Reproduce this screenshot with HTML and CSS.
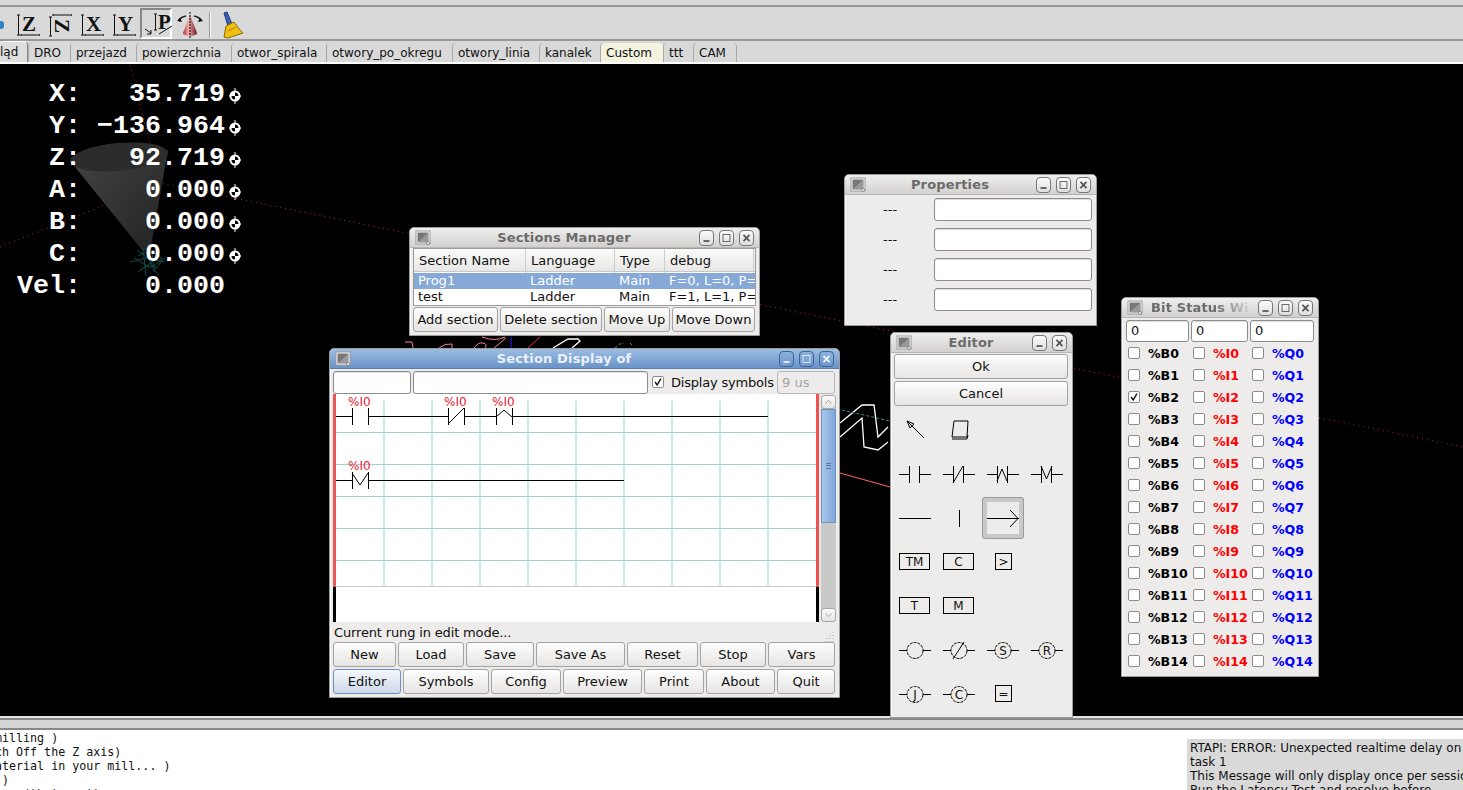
FILE: index.html
```html
<!DOCTYPE html>
<html lang="pl">
<head>
<meta charset="utf-8">
<title>AXIS ClassicLadder</title>
<link rel="stylesheet" href="styles.css">
</head>
<body>
<svg width="0" height="0" class="defs">
  <symbol id="wicon" viewBox="0 0 16 16"><rect x="1" y="1" width="14" height="13" fill="#fff" stroke="#999"/><rect x="2.5" y="2.5" width="11" height="10" fill="#777"/><path d="M3 12L13 3V12Z" fill="#999"/><circle cx="13" cy="13" r="1.5" fill="#eee" stroke="#666" stroke-width=".6"/></symbol>
  <symbol id="homed" viewBox="0 0 12 16"><path d="M6 0V16M0 8H12" stroke="#fff" stroke-width="1"/><circle cx="6" cy="8" r="5.500" fill="#fff"/><path d="M6 8V4.500A3.500 3.500 0 0 1 9.500 8ZM6 8V11.500A3.500 3.500 0 0 1 2.500 8Z" fill="#000"/></symbol>
</svg>

<div class="topline"></div>
<div class="toolbar">
  <span class="tb-stub"></span>
  <svg class="tb z" width="24" height="26" viewBox="0 0 24 26"><path d="M1 3H4M2.500 3V23M1 23H4M5 22V24M5 23H24M24 22V24" class="br"/><text x="6" y="19" class="tl">Z</text></svg>
  <svg class="tb" width="24" height="26" viewBox="0 0 24 26"><path d="M1 5H4M2.500 5V24M1 24H4M5 3H24M5 2V4M24 2V4" class="br"/><text x="14" y="21" text-anchor="middle" transform="rotate(90 14 14)" class="tl">Z</text></svg>
  <svg class="tb" width="24" height="26" viewBox="0 0 24 26"><path d="M1 3H4M2.500 3V23M1 23H4M5 22V24M5 23H24M24 22V24" class="br"/><text x="6" y="19" class="tl">X</text></svg>
  <svg class="tb" width="24" height="26" viewBox="0 0 24 26"><path d="M1 3H4M2.500 3V23M1 23H4M5 22V24M5 23H24M24 22V24" class="br"/><text x="6" y="19" class="tl">Y</text></svg>
  <span class="tb-active"><svg width="28" height="26" viewBox="0 0 28 26"><path d="M10 2H13M11.500 2V18M10 18H13M1 17L7 21M7 18V22M7 22H3M15 22L28 14" class="br"/><text x="14" y="17" class="tl">P</text></svg></span>
  <svg class="tb cone" width="26" height="26" viewBox="0 0 26 26"><defs><linearGradient id="cg" x1="0" x2="1" y1="0" y2="0"><stop offset="0" stop-color="#a33"/><stop offset=".4" stop-color="#f7b0a8"/><stop offset="1" stop-color="#612"/></linearGradient></defs><path d="M13 3L20 21A7 3 0 0 1 6 21Z" fill="url(#cg)"/><path d="M13 0V26" stroke="#000" stroke-dasharray="2 1"/><path d="M2 8Q4 5 9 4M24 8Q22 5 17 4" stroke="#222" stroke-width="1.500" fill="none"/><path d="M0 9L5 10L3 6ZM26 9L21 10L23 6Z" fill="#000"/></svg>
  <span class="tb-sep"></span>
  <svg class="tb broom" width="24" height="28" viewBox="0 0 24 28"><path d="M3 2L6 1L11 13L7 15Z" fill="#3b5fb5" stroke="#223a80"/><path d="M5 15L13 11L19 19L22 22L7 27L3 26Z" fill="#f2c00f" stroke="#8a6a00"/><path d="M7 20L15 16" stroke="#a47c00"/></svg>
</div>

<div class="tabs">
  <span class="tab first">ląd</span>
  <span class="tab w-dro">DRO</span>
  <span class="tab w-prz">przejazd</span>
  <span class="tab w-pow">powierzchnia</span>
  <span class="tab w-spi">otwor_spirala</span>
  <span class="tab w-okr">otwory_po_okregu</span>
  <span class="tab w-lin">otwory_linia</span>
  <span class="tab w-kan">kanalek</span>
  <span class="tab w-cus">Custom</span>
  <span class="tab w-ttt">ttt</span>
  <span class="tab w-cam">CAM</span>
</div>

<main class="canvas">
  <svg class="scene" width="1463" height="652" viewBox="0 64 1463 652">
    <defs><linearGradient id="cone" x1="0" x2="1" y1="0" y2="1"><stop offset="0" stop-color="#444"/><stop offset="1" stop-color="#222"/></linearGradient></defs>
    <path d="M130 65L160 183M0 247L160 183L1463 447" class="dotred"/>
    <path d="M71 162L168 150L150 252L142 250Z" fill="url(#cone)"/>
    <ellipse cx="119" cy="157" rx="49" ry="14" transform="rotate(-5 119 157)" fill="#2c2c2c"/>
    <path d="M130 262L146 258L165 262M137 250L148 258L158 275M160 250L152 262L138 272M143 248L146 276M152 250L154 272M134 258L150 268L165 258M140 270Q150 262 158 268M138 256Q146 250 156 254T158 266" class="teal"/>
    <path d="M405 342H412L413 348M439 348Q445 343 452 344L452 348M474 348Q478 342 483 343T485 348M482 337Q495 342 505 337M494 348L506 338" class="pink"/>
    <path d="M511 337V348" stroke="#22f" fill="none"/>
    <path d="M528 348L540 337" stroke="#e33" fill="none"/>
    <path d="M553 348L568 339H578L580 341L572 348" class="whitel"/>
    <path d="M615 348L620 344L624 343M630 343L632 345" class="tealdot"/>
    <path d="M840 423L862 405H874L878 437L888 427M840 437L862 418L864 447L878 450L888 442" class="whitel"/>
    <path d="M842 410L890 421" class="tealdot"/>
    <path d="M840 473L890 487" stroke="#f66" fill="none"/>
  </svg>

  <section class="dro">
    <div class="dro-row"><span class="dro-t">  X:   35.719</span><svg class="hm"><use href="#homed"/></svg></div>
    <div class="dro-row"><span class="dro-t">  Y: −136.964</span><svg class="hm"><use href="#homed"/></svg></div>
    <div class="dro-row"><span class="dro-t">  Z:   92.719</span><svg class="hm"><use href="#homed"/></svg></div>
    <div class="dro-row"><span class="dro-t">  A:    0.000</span><svg class="hm"><use href="#homed"/></svg></div>
    <div class="dro-row"><span class="dro-t">  B:    0.000</span><svg class="hm"><use href="#homed"/></svg></div>
    <div class="dro-row"><span class="dro-t">  C:    0.000</span><svg class="hm"><use href="#homed"/></svg></div>
    <div class="dro-row"><span class="dro-t">Vel:    0.000</span></div>
  </section>
</main>

<div class="splitter"></div>

<footer class="bottom">
  <pre class="gcode">milling )
ch Off the Z axis)
aterial in your mill... )
 )
    (that part)</pre>
  <div class="msg">RTAPI: ERROR: Unexpected realtime delay on<br>task 1<br>This Message will only display once per session.<br>Run the Latency Test and resolve before</div>
</footer>

<!-- Sections Manager -->
<div class="win win-sections">
  <div class="title"><svg class="wi"><use href="#wicon"/></svg><span class="tt">Sections Manager</span>
    <span class="wb"><svg viewBox="0 0 15 15"><path d="M4 11H11" class="g"/></svg></span><span class="wb"><svg viewBox="0 0 15 15"><rect x="3.500" y="3.500" width="8" height="8" class="g1"/></svg></span><span class="wb"><svg viewBox="0 0 15 15"><path d="M4 4L11 11M11 4L4 11" class="g"/></svg></span></div>
  <div class="sm-table">
    <div class="sm-head">
      <span>Section Name</span><span>Language</span><span>Type</span><span>debug</span>
    </div>
    <div class="sm-row sel"><span>Prog1</span><span>Ladder</span><span>Main</span><span>F=0, L=0, P=</span></div>
    <div class="sm-row"><span>test</span><span>Ladder</span><span>Main</span><span>F=1, L=1, P=</span></div>
  </div>
  <div class="sm-btns">
    <button class="btn">Add section</button><button class="btn">Delete section</button><button class="btn">Move Up</button><button class="btn">Move Down</button>
  </div>
</div>

<!-- Properties -->
<div class="win win-props">
  <div class="title"><svg class="wi"><use href="#wicon"/></svg><span class="tt">Properties</span>
    <span class="wb"><svg viewBox="0 0 15 15"><path d="M4 11H11" class="g"/></svg></span><span class="wb"><svg viewBox="0 0 15 15"><rect x="3.500" y="3.500" width="8" height="8" class="g1"/></svg></span><span class="wb"><svg viewBox="0 0 15 15"><path d="M4 4L11 11M11 4L4 11" class="g"/></svg></span></div>
  <div class="props">
    <span class="pl">---</span><span class="entry"></span>
    <span class="pl">---</span><span class="entry"></span>
    <span class="pl">---</span><span class="entry"></span>
    <span class="pl">---</span><span class="entry"></span>
  </div>
</div>

<!-- Section display -->
<div class="win win-display">
  <div class="title active"><svg class="wi"><use href="#wicon"/></svg><span class="tt">Section Display of</span>
    <span class="wb"><svg viewBox="0 0 15 15"><path d="M4 11H11" class="g"/></svg></span><span class="wb"><svg viewBox="0 0 15 15"><rect x="3.500" y="3.500" width="8" height="8" class="g1"/></svg></span><span class="wb"><svg viewBox="0 0 15 15"><path d="M4 4L11 11M11 4L4 11" class="g"/></svg></span></div>
  <div class="sd-top">
    <span class="entry e1"></span><span class="entry e2"></span>
    <span class="cb on"><svg viewBox="0 0 12 12"><path d="M2.500 6L5 9.500L9.500 2" class="chk"/></svg></span>
    <span class="ds">Display symbols</span>
    <span class="entry dis">9 us</span>
  </div>
  <div class="sd-mid">
    <svg class="ladder" width="486" height="228" viewBox="333 394 486 228">
      <path d="M384 400V587M432 400V587M480 400V587M528 400V587M576 400V587M624 400V587M672 400V587M720 400V587M768 400V587M336 432.500H816M336 464.500H816M336 496.500H816M336 528.500H816M336 560.500H816" class="grid"/>
      <path d="M336 586.500H816" class="gridb"/>
      <rect x="333" y="394" width="3" height="193" fill="#e85858"/><rect x="333" y="587" width="3" height="35" fill="#000"/>
      <rect x="816" y="394" width="3" height="193" fill="#f05050"/><rect x="816" y="587" width="3" height="35" fill="#000"/>
      <path d="M336 416.500H352M352.500 408V425M368.500 408V425M368 416.500H448M448.500 408V425M464.500 408V425M448 424L464 408M464 416.500H496M496.500 408V425M512.500 408V425M496 417L504 410L512 417M512 416.500H768M336 480.500H352M352.500 472V489M368.500 472V489M352 473L360 485L368 473M368 480.500H624" class="lad"/>
      <text x="348" y="406" class="lt">%I0</text><text x="444" y="406" class="lt">%I0</text><text x="492" y="406" class="lt">%I0</text><text x="348" y="470" class="lt">%I0</text>
    </svg>
    <div class="sb">
      <span class="sb-b"><svg viewBox="0 0 15 14"><path d="M4 9L7.500 5L11 9" class="ar"/></svg></span>
      <span class="sb-th"><i></i></span>
      <span class="sb-tr"></span>
      <span class="sb-b"><svg viewBox="0 0 15 14"><path d="M4 5L7.500 9L11 5" class="ar"/></svg></span>
    </div>
  </div>
  <div class="status"><span class="st">Current rung in edit mode...</span><svg class="grip" width="11" height="11" viewBox="0 0 11 11"><path d="M9 1V2M6 4V5M9 4V5M3 7V8M6 7V8M9 7V8M0 10V11M3 10V11M6 10V11M9 10V11" stroke="#aaa"/></svg></div>
  <div class="row1">
    <button class="btn">New</button><button class="btn">Load</button><button class="btn">Save</button><button class="btn">Save As</button><button class="btn">Reset</button><button class="btn">Stop</button><button class="btn">Vars</button>
  </div>
  <div class="row2">
    <button class="btn focus">Editor</button><button class="btn">Symbols</button><button class="btn">Config</button><button class="btn">Preview</button><button class="btn">Print</button><button class="btn">About</button><button class="btn">Quit</button>
  </div>
</div>

<!-- Editor -->
<div class="win win-editor">
  <div class="title"><svg class="wi"><use href="#wicon"/></svg><span class="tt">Editor</span>
    <span class="wb"><svg viewBox="0 0 15 15"><path d="M4 11H11" class="g"/></svg></span><span class="wb"><svg viewBox="0 0 15 15"><path d="M4 4L11 11M11 4L4 11" class="g"/></svg></span></div>
  <div class="ed-btns"><button class="btn">Ok</button><button class="btn">Cancel</button></div>
  <div class="palette">
    <span class="pc"><svg viewBox="0 0 32 32"><path d="M25 24L9 8M8 7L15 10L11 14Z" class="ic"/></svg></span>
    <span class="pc"><svg viewBox="0 0 32 32"><path d="M11 7H25L24 23H9ZM9 25H24L25 21" class="ic"/></svg></span>
    <span class="pc"></span><span class="pc"></span>

    <span class="pc"><svg viewBox="0 0 32 32"><path d="M0 16.500H10M10.500 8V25M20.500 8V25M20 16.500H32" class="ic"/></svg></span>
    <span class="pc"><svg viewBox="0 0 32 32"><path d="M0 16.500H10M10.500 8V25M20.500 8V25M20 16.500H32M10 25L20 8" class="ic"/></svg></span>
    <span class="pc"><svg viewBox="0 0 32 32"><path d="M0 16.500H10M10.500 8V25M20.500 8V25M20 16.500H32M10 23L15 11L20 23" class="ic"/></svg></span>
    <span class="pc"><svg viewBox="0 0 32 32"><path d="M0 16.500H10M10.500 8V25M20.500 8V25M20 16.500H32M10 8L15.500 21L21 8" class="ic"/></svg></span>

    <span class="pc"><svg viewBox="0 0 32 32"><path d="M0 16.500H32" class="ic"/></svg></span>
    <span class="pc"><svg viewBox="0 0 32 32"><path d="M16.500 8V25" class="ic"/></svg></span>
    <span class="pc selbtn"><svg viewBox="0 0 32 32"><path d="M0 16.500H32M23 8L31 16.500L23 25" class="ic"/></svg></span>
    <span class="pc"></span>

    <span class="pc"><svg viewBox="0 0 32 32"><rect x=".5" y="7.500" width="30" height="16" class="ic"/><text x="15.500" y="19.500" class="pt">TM</text></svg></span>
    <span class="pc"><svg viewBox="0 0 32 32"><rect x=".5" y="7.500" width="30" height="16" class="ic"/><text x="15.500" y="19.500" class="pt">C</text></svg></span>
    <span class="pc"><svg viewBox="0 0 32 32"><rect x="8.500" y="7.500" width="16" height="16" class="ic"/><text x="16.500" y="19.500" class="pt">&gt;</text></svg></span>
    <span class="pc"></span>

    <span class="pc"><svg viewBox="0 0 32 32"><rect x=".5" y="7.500" width="30" height="16" class="ic"/><text x="15.500" y="19.500" class="pt">T</text></svg></span>
    <span class="pc"><svg viewBox="0 0 32 32"><rect x=".5" y="7.500" width="30" height="16" class="ic"/><text x="15.500" y="19.500" class="pt">M</text></svg></span>
    <span class="pc"></span><span class="pc"></span>

    <span class="pc"><svg viewBox="0 0 32 32"><path d="M0 16.500H8M24 16.500H32" class="ic"/><circle cx="16" cy="16.500" r="8" class="dc"/></svg></span>
    <span class="pc"><svg viewBox="0 0 32 32"><path d="M0 16.500H8M24 16.500H32M10 25L21 8" class="ic"/><circle cx="16" cy="16.500" r="8" class="dc"/></svg></span>
    <span class="pc"><svg viewBox="0 0 32 32"><path d="M0 16.500H8M24 16.500H32" class="ic"/><circle cx="16" cy="16.500" r="8" class="dc"/><text x="16" y="21" class="pt">S</text></svg></span>
    <span class="pc"><svg viewBox="0 0 32 32"><path d="M0 16.500H8M24 16.500H32" class="ic"/><circle cx="16" cy="16.500" r="8" class="dc"/><text x="16" y="21" class="pt">R</text></svg></span>

    <span class="pc"><svg viewBox="0 0 32 32"><path d="M0 16.500H8M24 16.500H32" class="ic"/><circle cx="16" cy="16.500" r="8" class="dc"/><text x="16" y="21" class="pt">J</text></svg></span>
    <span class="pc"><svg viewBox="0 0 32 32"><path d="M0 16.500H8M24 16.500H32" class="ic"/><circle cx="16" cy="16.500" r="8" class="dc"/><text x="16" y="21" class="pt">C</text></svg></span>
    <span class="pc"><svg viewBox="0 0 32 32"><rect x="8.500" y="7.500" width="16" height="16" class="ic"/><text x="16.500" y="19.500" class="pt">=</text></svg></span>
    <span class="pc"></span>
  </div>
</div>

<!-- Bit status -->
<div class="win win-bits">
  <div class="title"><svg class="wi"><use href="#wicon"/></svg><span class="tt fade">Bit Status Wi</span>
    <span class="wb"><svg viewBox="0 0 15 15"><path d="M4 11H11" class="g"/></svg></span><span class="wb"><svg viewBox="0 0 15 15"><rect x="3.500" y="3.500" width="8" height="8" class="g1"/></svg></span><span class="wb"><svg viewBox="0 0 15 15"><path d="M4 4L11 11M11 4L4 11" class="g"/></svg></span></div>
  <div class="bits-top"><span class="entry">0</span><span class="entry">0</span><span class="entry">0</span></div>
  <div class="bits" id="bits"></div>
</div>

<script src="bits.js"></script>
</body>
</html>
```

FILE: bits.js
```js
var host = document.getElementById('bits');
var html = '';
for (var i = 0; i < 15; i++) {
  var checked = i === 2;
  html += '<span class="cb' + (checked ? ' on' : '') + '">' +
    (checked ? '<svg viewBox="0 0 12 12"><path d="M2.500 6L5 9.500L9.500 2" class="chk"/></svg>' : '') +
    '</span><b class="bb">%B' + i + '</b>';
  html += '<span class="cb"></span><b class="bi">%I' + i + '</b>';
  html += '<span class="cb"></span><b class="bq">%Q' + i + '</b>';
}
host.innerHTML = html;
```

FILE: styles.css
```css
* { box-sizing: border-box; }
html, body { margin: 0; padding: 0; }
body {
  width: 1463px; height: 790px; overflow: hidden; position: relative;
  background: #fff; display: flex; flex-direction: column;
  font: 13px "DejaVu Sans", sans-serif; color: #111;
}
.defs { position: absolute; }

.topline { height: 7px; flex: none; background: #d9d9d9; border-bottom: 2px solid #999; }
.toolbar {
  height: 34px; flex: none; background: #d9d9d9; border-bottom: 2px solid #999;
  display: flex; align-items: center; position: relative; padding-top: 3px;
}
.tb-stub { width: 4px; height: 8px; background: #2b86c5; border-radius: 0 3px 3px 0; margin-right: 12px; }
.tb { flex: none; margin-right: 8px; }
.br { stroke: #111; fill: none; stroke-width: 1; }
.tl { font: bold 21px "Liberation Serif", serif; fill: #111; }
.tb-active {
  width: 32px; height: 31px; flex: none; margin: -2px 5px 0 -4px; padding: 2px 0 0 2px;
  border: 2px solid; border-color: #888 #fff #fff #888; background: #d9d9d9;
}
.cone { margin-right: 6px; }
.tb-sep { width: 2px; height: 26px; background: linear-gradient(90deg, #999 50%, #fff 50%); margin: 0 10px 0 0; flex: none; }

.tabs {
  height: 23px; flex: none; background: #d9d9d9; display: flex; align-items: flex-end;
  border-bottom: 2px solid #fff; font-size: 12px;
}
.tab {
  height: 19px; line-height: 21px; padding-left: 5px; flex: none; background: #d9d9d9;
  border-left: 1px solid #a8a8a8; border-top-left-radius: 4px; border-top-right-radius: 4px;
}
.tab.first {
  width: 28px; height: 21px; padding: 0; line-height: 20px; background: #dedede;
  border-left: 0; border-top: 1px solid #fff; border-right: 1px solid #888;
}
.w-dro { width: 42px; } .w-prz { width: 66px; } .w-pow { width: 95px; } .w-spi { width: 95px; }
.w-okr { width: 126px; } .w-lin { width: 87px; } .w-kan { width: 61px; }
.w-cus { width: 63px; background: #f3f3e0; } .w-ttt { width: 30px; } .w-cam { width: 44px; border-right: 1px solid #a8a8a8; }

.canvas { height: 652px; flex: none; background: #000; position: relative; overflow: hidden; }
.scene { position: absolute; left: 0; top: 0; }
.dotred { fill: none; stroke: #c02525; stroke-width: 1; stroke-dasharray: 1 4; }
.teal { fill: none; stroke: #124a4a; stroke-width: 1; }
.tealdot { fill: none; stroke: #4a8a8a; stroke-dasharray: 3 2; }
.pink { fill: none; stroke: #f08090; }
.whitel { fill: none; stroke: #fff; stroke-width: 1.3; }

.dro {
  position: absolute; left: 17px; top: 14px; color: #fff;
  font: bold 26.67px/32px "Liberation Mono", monospace;
}
.dro-row { height: 32px; display: flex; align-items: center; white-space: pre; }
.hm { width: 12px; height: 16px; margin: 4px 0 0 4px; }

.splitter { height: 14px; flex: none; background: #d6d6d6; border-top: 2px solid #e4e4e4; position: relative; }
.splitter::before { content: ""; display: block; height: 2px; background: #888; }
.splitter::after { content: ""; display: block; height: 2px; background: #888; margin-top: 8px; }

.bottom { flex: 1; min-height: 0; position: relative; overflow: hidden; background: #fff; display: flex; justify-content: space-between; }
.gcode { margin: 1px 0 0 -5px; font: 11.67px/14px "DejaVu Sans Mono", monospace; color: #111; }
.msg {
  width: 276px; height: 51px; margin-top: 9px; padding: 2px 0 0 3px; background: #d9d9d9;
  font-size: 12px; line-height: 14px; white-space: nowrap; overflow: hidden; flex: none;
}

.win {
  position: absolute; background: #edecea; border: 1px solid #9c9c9a;
  border-radius: 5px 5px 0 0; display: flex; flex-direction: column;
  box-shadow: inset 1px 0 0 #fafafa;
}
.title {
  height: 20px; flex: none; display: flex; align-items: center; padding: 0 5px 0 5px;
  background: linear-gradient(#eeeeec, #d2d1cf); border-bottom: 1px solid #b5b5b3;
  border-radius: 4px 4px 0 0; color: #6b6b6b;
}
.title.active { background: linear-gradient(#9cbde3, #6a93c8); color: #eaf1fa; border-bottom-color: #5a7fb0; }
.wi { width: 16px; height: 16px; flex: none; margin-right: 3px; }
.tt { flex: 1; text-align: center; font-weight: bold; font-size: 13px; letter-spacing: .15px; white-space: nowrap; overflow: hidden; }
.tt.fade { text-align: left; padding-left: 5px; -webkit-mask-image: linear-gradient(90deg, #000 65%, transparent 100%); mask-image: linear-gradient(90deg, #000 65%, transparent 100%); }
.wb {
  width: 15px; height: 16px; flex: none; margin-left: 5px; border: 1px solid #777; border-radius: 4px;
  background: linear-gradient(#fbfbfb, #dfdfdd); display: flex;
}
.title.active .wb { background: linear-gradient(#8cb0dc, #6f99cf); border-color: #3f6596; }
.wb svg { width: 100%; height: 100%; }
.g { stroke: #555; stroke-width: 2; fill: none; }
.g1 { stroke: #555; stroke-width: 1; fill: none; }
.title.active .g, .title.active .g1 { stroke: #eef4fb; }

.btn {
  font: 13px "DejaVu Sans", sans-serif; color: #111; padding: 0; margin: 0;
  border: 1px solid #a3a3a1; border-radius: 3px; background: linear-gradient(#fdfdfd, #e6e5e3);
  white-space: nowrap; overflow: hidden;
}
.btn.focus { background: linear-gradient(#f3f6fa, #cddaea); border-color: #6d92c0; }
.entry {
  display: block; background: #fff; border: 1px solid #8c8c8a; border-radius: 3px;
  box-shadow: inset 0 1px 1px #ddd; padding-left: 4px;
}

/* Sections manager */
.win-sections { left: 409px; top: 227px; width: 351px; height: 109px; }
.sm-table { margin: 0 3px; height: 58px; border: 1px solid #9c9c9a; background: #fff; flex: none; }
.sm-head, .sm-row { display: grid; grid-template-columns: 112px 89px 50px 1fr; }
.sm-head {
  height: 23px; line-height: 24px; background: linear-gradient(#fafafa, #e8e7e5); border-bottom: 1px solid #c8c8c6;
  margin-bottom: 1px;
}
.sm-head span { padding-left: 5px; border-right: 1px solid #ccc; }
.sm-head span:last-child { margin-right: 1px; }
.sm-row { height: 16px; line-height: 15px; padding-left: 4px; }
.sm-row span { overflow: hidden; white-space: nowrap; }
.sm-row.sel { background: #86a9d8; color: #fff; }
.sm-btns { display: grid; grid-template-columns: 85px 102px 66px 83px; gap: 2px; margin: 1px 0 0 3px; height: 25px; }

/* Properties */
.win-props { left: 844px; top: 174px; width: 253px; height: 152px; }
.props { display: grid; grid-template-columns: 89px 158px; grid-auto-rows: 23px; row-gap: 7px; padding: 3px 0 0 0; }
.pl { line-height: 23px; padding-left: 38px; }
.props .entry { height: 23px; }

/* Section display */
.win-display { left: 329px; top: 348px; width: 511px; height: 350px; }
.sd-top { display: flex; align-items: center; height: 25px; padding: 1px 0 0 3px; flex: none; }
.sd-top .entry { height: 23px; flex: none; }
.e1 { width: 78px; margin-right: 2px; }
.e2 { width: 235px; margin-right: 4px; }
.cb { width: 12px; height: 12px; flex: none; display: block; border: 1px solid #8c8c8a; background: #fff; border-radius: 2px; }
.cb svg { display: block; width: 10px; height: 10px; }
.chk { fill: none; stroke: #111; stroke-width: 1.6; }
.ds { margin: 0 3px 0 7px; width: 103px; flex: none; white-space: nowrap; letter-spacing: -.2px; }
.sd-top .dis { width: 58px; background: #edecea; color: #a4a4a2; border-color: #b8b8b6; line-height: 21px; box-shadow: none; }
.sd-mid { display: flex; height: 228px; flex: none; padding-left: 3px; position: relative; }
.ladder { display: block; background: #fff; flex: none; }
.grid { stroke: #9dd4d0; stroke-width: 1; fill: none; }
.gridb { stroke: #bfcfcf; stroke-width: 1; fill: none; }
.lad { stroke: #000; stroke-width: 1; fill: none; }
.lt { font: 12px "DejaVu Sans", sans-serif; fill: #f02030; }
.sb { width: 15px; margin: 1px 0 0 2px; display: flex; flex-direction: column; background: #c9c9c7; border-radius: 3px; flex: none; height: 227px; }
.sb-b { height: 14px; flex: none; display: block; background: linear-gradient(#fafafa, #e4e4e2); border: 1px solid #a8a8a6; border-radius: 3px; }
.sb-b svg { display: block; width: 100%; height: 100%; }
.ar { fill: none; stroke: #999; }
.sb-th { height: 114px; flex: none; background: linear-gradient(90deg, #a9c6ea, #7fa6d8); border: 1px solid #6d92c0; display: flex; align-items: center; justify-content: center; }
.sb-th i { display: block; width: 5px; height: 6px; background: repeating-linear-gradient(#4f74a8 0 1px, transparent 1px 2.5px); }
.sb-tr { flex: 1; }
.status { height: 20px; flex: none; display: flex; justify-content: space-between; align-items: center; padding: 0 4px; }
.st { letter-spacing: -.15px; }
.grip { margin-top: 8px; }
.row1, .row2 { display: grid; gap: 2px; height: 25px; margin: 0 0 2px 3px; flex: none; }
.row1 { grid-template-columns: 63px 66px 68px 89px 71px 66px 67px; }
.row2 { grid-template-columns: 68px 86px 70px 79px 60px 69px 58px; }

/* Editor */
.win-editor { left: 890px; top: 332px; width: 183px; height: 386px; }
.ed-btns { display: grid; grid-auto-rows: 25px; row-gap: 2px; padding: 1px 4px 0 3px; flex: none; }
.palette { display: grid; grid-template-columns: repeat(4, 44px); grid-auto-rows: 44px; margin: 2px 0 0 2px; }
.pc { display: flex; align-items: center; justify-content: center; }
.pc svg { width: 32px; height: 32px; display: block; overflow: visible; }
.selbtn { margin: 1px; background: #edecea; border: 5px solid #c9c8c6; outline: 1px solid #999; outline-offset: -1px; border-radius: 3px; }
.selbtn svg { width: 32px; height: 32px; flex: none; }
.ic { fill: none; stroke: #000; stroke-width: 1; }
.dc { fill: none; stroke: #000; stroke-width: 1; stroke-dasharray: 3 1; }
.pt { font: 12px "DejaVu Sans", sans-serif; fill: #111; text-anchor: middle; }

/* Bits */
.win-bits { left: 1121px; top: 297px; width: 198px; height: 380px; }
.bits-top { display: grid; grid-template-columns: 63px 57px 64px; gap: 2px; padding: 2px 0 0 4px; height: 24px; flex: none; }
.bits-top .entry { height: 22px; line-height: 20px; }
.bits { display: grid; grid-template-columns: 12px 53px 12px 47px 12px 1fr; grid-auto-rows: 22px; padding: 0 0 0 6px; align-items: center; }
.bits b { font-size: 12.6px; padding-left: 8px; white-space: nowrap; }
.bb { color: #000; } .bi { color: #f00; } .bq { color: #00f; }
```
